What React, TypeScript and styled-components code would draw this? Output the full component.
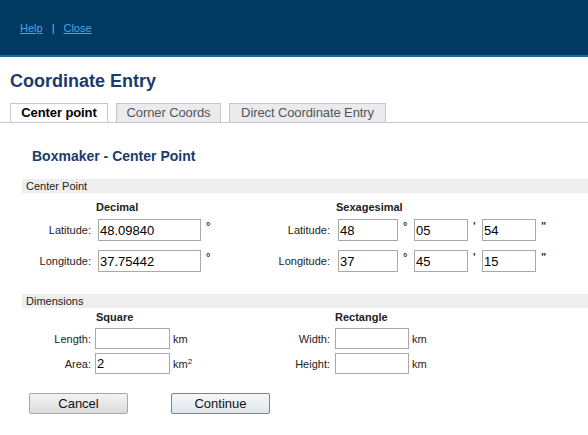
import React from "react";
import styled, { createGlobalStyle } from "styled-components";

const GlobalStyle = createGlobalStyle`
  body {
    margin: 0;
    background: #fff;
    font-family: "Liberation Sans", Arial, sans-serif;
    color: #222;
  }
`;

const Header = styled.header`
  height: 55px;
  background: #003a60;
  border-bottom: 2px solid #1f6b9f;
  display: flex;
  align-items: center;
  padding-left: 20px;
  font-size: 11px;
  color: #9fb7cc;
`;

const HeaderLink = styled.a`
  color: #4ea2e4;
  text-decoration: underline;
  cursor: pointer;
`;

const Divider = styled.span`
  margin: 0 9px;
`;

const Title = styled.h1`
  margin: 0;
  padding: 14px 10px 0;
  font-size: 18px;
  line-height: 21px;
  font-weight: bold;
  color: #1a3c6c;
`;

const TabBar = styled.div`
  display: flex;
  gap: 8px;
  margin-top: 11px;
  padding-left: 10px;
  border-bottom: 1px solid #c6c6c6;
  height: 19px;
`;

const Tab = styled.div<{ $active?: boolean; $w: number }>`
  box-sizing: border-box;
  width: ${({ $w }) => $w}px;
  height: 19px;
  line-height: 18px;
  text-align: center;
  white-space: nowrap;
  font-size: 13px;
  letter-spacing: -0.1px;
  border: 1px solid #c6c6c6;
  border-bottom: ${({ $active }) => ($active ? "1px solid #fff" : "none")};
  background: ${({ $active }) => ($active ? "#fff" : "#e9ebee")};
  color: ${({ $active }) => ($active ? "#000" : "#555")};
  font-weight: ${({ $active }) => ($active ? "bold" : "normal")};
  cursor: pointer;
`;

const SubTitle = styled.h2`
  margin: 25px 0 0;
  padding-left: 32px;
  font-size: 14px;
  line-height: 17px;
  font-weight: bold;
  color: #1a3c6c;
`;

const Section = styled.div<{ $top: number }>`
  margin-left: 22px;
  margin-top: ${({ $top }) => $top}px;
`;

const SectionBar = styled.div`
  height: 14px;
  line-height: 14px;
  background: #eeeeee;
  padding-left: 4px;
  font-size: 11px;
  color: #222;
`;

const Columns = styled.div`
  display: flex;
`;

const Group = styled.div<{ $w?: number }>`
  width: ${({ $w }) => ($w ? `${$w}px` : "auto")};
  display: flex;
  flex-direction: column;
`;

const GroupHead = styled.div<{ $indent: number; $top: number; $gap: number }>`
  padding-left: ${({ $indent }) => $indent}px;
  margin-top: ${({ $top }) => $top}px;
  margin-bottom: ${({ $gap }) => $gap}px;
  font-size: 11px;
  line-height: 13px;
  font-weight: bold;
  color: #222;
`;

const Rows = styled.div<{ $gap: number }>`
  display: flex;
  flex-direction: column;
  gap: ${({ $gap }) => $gap}px;
`;

const Row = styled.div`
  display: flex;
  align-items: center;
`;

const Label = styled.label<{ $w: number; $gap: number }>`
  width: ${({ $w }) => $w}px;
  margin-right: ${({ $gap }) => $gap}px;
  text-align: right;
  font-size: 11px;
  color: #222;
  white-space: nowrap;
`;

const Field = styled.input<{ $w: number; $h?: number }>`
  box-sizing: border-box;
  width: ${({ $w }) => $w}px;
  height: ${({ $h }) => $h ?? 22}px;
  border: 1px solid #a9a9a9;
  padding: 0 1px;
  margin: 0;
  font-family: "Liberation Sans", Arial, sans-serif;
  font-size: 13px;
  color: #000;
  outline: none;
`;

const Mark = styled.span<{ $w: number }>`
  width: ${({ $w }) => $w}px;
  box-sizing: border-box;
  padding-left: 5px;
  align-self: flex-start;
  margin-top: 1px;
  font-size: 11px;
  font-weight: bold;
  color: #333;
`;

const Unit = styled.span`
  margin-left: 3px;
  font-size: 11px;
  color: #222;

  sup {
    font-size: 8px;
    vertical-align: 4px;
    line-height: 0;
  }
`;

const ButtonRow = styled.div`
  display: flex;
  gap: 43px;
  margin-top: 19px;
  padding-left: 29px;
`;

const Button = styled.button<{ $primary?: boolean }>`
  width: 99px;
  height: 21px;
  padding: 0;
  font-family: "Liberation Sans", Arial, sans-serif;
  font-size: 13px;
  color: #111;
  border-radius: 2px;
  border: 1px solid ${({ $primary }) => ($primary ? "#4b8ed0" : "#a8a8a8")};
  background: ${({ $primary }) =>
    $primary
      ? "linear-gradient(#f3f8fc, #e0e6ec)"
      : "linear-gradient(#f3f3f3, #dcdcdc)"};
  cursor: pointer;
`;

const App: React.FC = () => {
  return (
    <>
      <GlobalStyle />
      <Header>
        <HeaderLink>Help</HeaderLink>
        <Divider>|</Divider>
        <HeaderLink>Close</HeaderLink>
      </Header>

      <Title>Coordinate Entry</Title>

      <TabBar>
        <Tab $active $w={98}>
          Center point
        </Tab>
        <Tab $w={105}>Corner Coords</Tab>
        <Tab $w={157}>Direct Coordinate Entry</Tab>
      </TabBar>

      <SubTitle>Boxmaker - Center Point</SubTitle>

      <Section $top={14}>
        <SectionBar>Center Point</SectionBar>
        <Columns>
          <Group $w={248}>
            <GroupHead $indent={74} $top={8} $gap={5}>
              Decimal
            </GroupHead>
            <Rows $gap={9}>
              <Row>
                <Label $w={69} $gap={7}>Latitude:</Label>
                <Field $w={103} defaultValue="48.09840" />
                <Mark $w={14}>°</Mark>
              </Row>
              <Row>
                <Label $w={69} $gap={7}>Longitude:</Label>
                <Field $w={103} defaultValue="37.75442" />
                <Mark $w={14}>°</Mark>
              </Row>
            </Rows>
          </Group>
          <Group>
            <GroupHead $indent={66} $top={8} $gap={5}>
              Sexagesimal
            </GroupHead>
            <Rows $gap={9}>
              <Row>
                <Label $w={60} $gap={8}>Latitude:</Label>
                <Field $w={60} defaultValue="48" />
                <Mark $w={16}>°</Mark>
                <Field $w={54} defaultValue="05" />
                <Mark $w={14}>'</Mark>
                <Field $w={54} defaultValue="54" />
                <Mark $w={14}>"</Mark>
              </Row>
              <Row>
                <Label $w={60} $gap={8}>Longitude:</Label>
                <Field $w={60} defaultValue="37" />
                <Mark $w={16}>°</Mark>
                <Field $w={54} defaultValue="45" />
                <Mark $w={14}>'</Mark>
                <Field $w={54} defaultValue="15" />
                <Mark $w={14}>"</Mark>
              </Row>
            </Rows>
          </Group>
        </Columns>
      </Section>

      <Section $top={22}>
        <SectionBar>Dimensions</SectionBar>
        <Columns>
          <Group $w={248}>
            <GroupHead $indent={74} $top={3} $gap={4}>
              Square
            </GroupHead>
            <Rows $gap={4}>
              <Row>
                <Label $w={69} $gap={4}>Length:</Label>
                <Field $w={75} $h={21} />
                <Unit>km</Unit>
              </Row>
              <Row>
                <Label $w={69} $gap={4}>Area:</Label>
                <Field $w={75} $h={21} defaultValue="2" />
                <Unit>
                  km<sup>2</sup>
                </Unit>
              </Row>
            </Rows>
          </Group>
          <Group>
            <GroupHead $indent={65} $top={3} $gap={4}>
              Rectangle
            </GroupHead>
            <Rows $gap={4}>
              <Row>
                <Label $w={60} $gap={5}>Width:</Label>
                <Field $w={74} $h={21} />
                <Unit>km</Unit>
              </Row>
              <Row>
                <Label $w={60} $gap={5}>Height:</Label>
                <Field $w={74} $h={21} />
                <Unit>km</Unit>
              </Row>
            </Rows>
          </Group>
        </Columns>
      </Section>

      <ButtonRow>
        <Button>Cancel</Button>
        <Button $primary>Continue</Button>
      </ButtonRow>
    </>
  );
};

export default App;
